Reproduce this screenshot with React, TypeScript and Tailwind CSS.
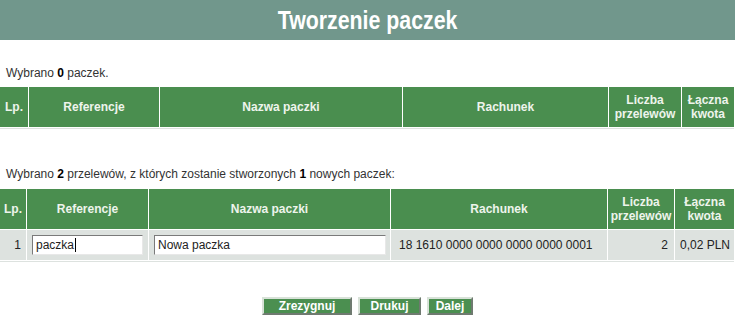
import React from 'react'

const first = [
  { label: 'Lp.' },
  { label: 'Referencje' },
  { label: 'Nazwa paczki' },
  { label: 'Rachunek' },
  { label: 'Liczba przelewów', two: ['Liczba', 'przelewów'] },
  { label: 'Łączna kwota', two: ['Łączna', 'kwota'] },
]

function Head({ cols }: { cols: string }) {
  return (
    <div className={`grid ${cols} gap-x-px h-[40px]`}>
      {first.map((c) => (
        <div key={c.label} className="bg-[#4a8e4f] flex flex-col items-center justify-center text-center font-bold text-[12px] leading-[14px] text-[#eef4ec]">
          {c.two ? c.two.map((t) => <span key={t}>{t}</span>) : c.label}
        </div>
      ))}
    </div>
  )
}

function Btn({ label, w }: { label: string; w: string }) {
  return (
    <button className={`${w} h-[18px] bg-[#4b8f50] text-white font-bold text-[12px] leading-none border-2 border-t-[#d8e2d8] border-l-[#d8e2d8] border-b-[#6f7a70] border-r-[#6f7a70]`}>
      {label}
    </button>
  )
}

export default function App() {
  const c1 = 'grid-cols-[28px_130px_242px_205px_72px_52px]'
  const c2 = 'grid-cols-[26px_121px_241px_216px_66px_59px]'
  return (
    <div className="w-[735px] h-[334px] bg-white text-[#333] text-[12px] leading-[14px]" style={{ fontFamily: '"Liberation Sans", Arial, sans-serif' }}>
      <div className="h-[40px] bg-[#71978c] flex items-center justify-center">
        <h1 className="text-white font-bold text-[26px] leading-none scale-x-[0.82]">
          Tworzenie paczek
        </h1>
      </div>

      <p className="mt-[26px] pl-[6px]">
        Wybrano <b className="text-black">0</b> paczek.
      </p>
      <div className="mt-[7px]">
        <Head cols={c1} />
        <div className="h-px mt-px w-[734px] bg-[#dde2df]" />
      </div>

      <p className="mt-[38px] pl-[6px]">
        Wybrano <b className="text-black">2</b> przelewów, z których zostanie stworzonych <b className="text-black">1</b> nowych paczek:
      </p>
      <div className="mt-[8px]">
        <Head cols={c2} />
        <div className={`grid ${c2} gap-x-px mt-px h-[30px] text-[#222]`}>
          <div className="bg-[#dde2df] flex items-center justify-end pr-[5px]">1</div>
          <div className="bg-[#dde2df] flex items-center pl-[5px]">
            <div className="relative">
              <input readOnly value="paczka" className="w-[111px] h-[20px] bg-white px-[3px] text-[12px] border border-t-[#7a7a7a] border-l-[#7a7a7a] border-b-[#e8e8e8] border-r-[#e8e8e8] outline-none" />
              <span className="absolute left-[43px] top-[3px] w-px h-[14px] bg-black" />
            </div>
          </div>
          <div className="bg-[#dde2df] flex items-center pl-[5px]">
            <input readOnly value="Nowa paczka" className="w-[232px] h-[20px] bg-white px-[3px] text-[12px] border border-t-[#7a7a7a] border-l-[#7a7a7a] border-b-[#e8e8e8] border-r-[#e8e8e8] outline-none" />
          </div>
          <div className="bg-[#dde2df] flex items-center pl-[8px]">18 1610 0000 0000 0000 0000 0001</div>
          <div className="bg-[#dde2df] flex items-center justify-end pr-[6px]">2</div>
          <div className="bg-[#dde2df] flex items-center pl-[5px]">0,02 PLN</div>
        </div>
        <div className="h-px mt-px w-[734px] bg-[#dde2df]" />
      </div>

      <div className="mt-[35px] flex justify-center gap-[6px]">
        <Btn label="Zrezygnuj" w="w-[90px]" />
        <Btn label="Drukuj" w="w-[63px]" />
        <Btn label="Dalej" w="w-[46px]" />
      </div>
    </div>
  )
}
